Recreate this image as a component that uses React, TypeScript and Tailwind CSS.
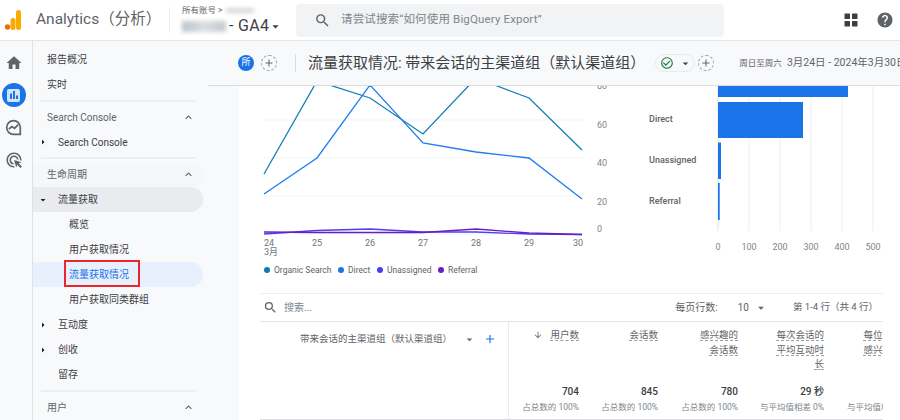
import { MdHome, MdBarChart, MdOutlineAdsClick, MdSearch, MdHelp, MdExpandLess, MdArrowDropDown, MdArrowRight, MdAdd, MdArrowDownward, MdCheckCircleOutline } from 'react-icons/md'

const FONT = 'font-["Roboto","Noto_Sans_CJK_SC",sans-serif]'

function NavRow({ label, level = 0, arrow, className = '' }: { label: string; level?: number; arrow?: 'down' | 'right'; className?: string }) {
  return (
    <div className={`flex h-[25px] items-center rounded-r-full text-[10px] text-[#3c4043] ${className}`} style={{ paddingLeft: level === 2 ? 36 : level === 1 ? 25 : 14 }}>
      {arrow === 'right' && <MdArrowRight className="ml-[-21px] mr-[9px] text-[12px] text-[#202124]" />}
      {arrow === 'down' && <MdArrowDropDown className="ml-[-21px] mr-[9px] text-[12px] text-[#202124]" />}
      {label}
    </div>
  )
}

function NavHeader({ label, className = '' }: { label: string; className?: string }) {
  return (
    <div className={`flex h-[25px] items-center justify-between rounded-r-full pl-[14px] pr-[8px] text-[10px] text-[#5f6368] ${className}`}>
      {label}
      <MdExpandLess className="text-[13px]" />
    </div>
  )
}

function Divider() {
  return <div className="my-[2.75px] ml-[8px] mr-[7px] h-[2px] bg-[#eceef1]" />
}

function LineChart() {
  const xs = [264, 317, 370, 423, 476, 529, 582]
  const series = [
    { color: '#127fb5', ys: [173, 80, 97, 133, 77, 97, 149] },
    { color: '#1f7cf0', ys: [193, 157, 84, 142, 151, 157, 198] },
    { color: '#4a3ff0', ys: [233, 229.5, 228, 231, 231, 233, 233.5] },
    { color: '#6a1ec0', ys: [231, 231.5, 231.5, 231.5, 228, 232, 233.5] },
  ]
  const legend = [
    { x: 267, tx: 274, color: '#0b7ab0', label: 'Organic Search' },
    { x: 341, tx: 348, color: '#1a73e8', label: 'Direct' },
    { x: 380, tx: 387, color: '#4a3ff0', label: 'Unassigned' },
    { x: 441, tx: 448, color: '#6a1ec0', label: 'Referral' },
  ]
  const bars = [
    { y: 80, h: 16, w: 130 },
    { y: 101, h: 36, w: 85 },
    { y: 141.5, h: 36.5, w: 3 },
    { y: 182, h: 37, w: 1.7 },
  ]
  return (
    <svg width={661} height={207} viewBox="239 85 661 207" className="block shrink-0" style={{ fontFamily: 'Roboto, sans-serif' }}>
      {[119, 157, 195, 233].map((y) => (
        <line key={y} x1={264} x2={583} y1={y} y2={y} stroke="#f1f3f4" />
      ))}
      {series.map((s) => (
        <polyline key={s.color} fill="none" stroke={s.color} strokeWidth={1.3} points={xs.map((x, i) => `${x},${s.ys[i]}`).join(' ')} />
      ))}
      {[24, 25, 26, 27, 28, 29, 30].map((d, i) => (
        <text key={d} x={i === 0 ? 264 : i === 6 ? 573 : xs[i] - 5} y={245} fontSize={9} fill="#70757a">{d}</text>
      ))}
      <text x={264} y={254} fontSize={9} fill="#70757a" style={{ fontFamily: 'Roboto, "Noto Sans CJK SC", sans-serif' }}>3月</text>
      {[['80', 88], ['60', 127], ['40', 165], ['20', 204], ['0', 231]].map(([t, y]) => (
        <text key={t} x={597} y={y} fontSize={9} fill="#80868b">{t}</text>
      ))}
      {legend.map((l) => (
        <g key={l.label}>
          <circle cx={l.x} cy={269} r={3} fill={l.color} />
          <text x={l.tx} y={272} fontSize={8.5} fill="#5f6368">{l.label}</text>
        </g>
      ))}
      {[749, 780, 811, 842, 873].map((x) => (
        <line key={x} x1={x} x2={x} y1={85} y2={230} stroke="#eceef0" />
      ))}
      <line x1={718} x2={718} y1={85} y2={230} stroke="#e0e2e5" />
      {bars.map((b) => (
        <rect key={b.y} x={718} y={b.y} width={b.w} height={b.h} fill="#1a73e8" />
      ))}
      {[['Direct', 121], ['Unassigned', 162], ['Referral', 203]].map(([t, y]) => (
        <text key={t} x={649} y={y} fontSize={9} fontWeight={500} fill="#5f6368">{t}</text>
      ))}
      {[0, 100, 200, 300, 400, 500].map((v, i) => (
        <text key={v} x={718 + i * 31} y={249} fontSize={9} fill="#80868b" textAnchor="middle">{v}</text>
      ))}
    </svg>
  )
}

const columns = [
  { w: 'w-[70px]', head: ['用户数'], arrow: true, value: '704', sub: '占总数的 100%' },
  { w: 'w-[79px]', head: ['会话数'], value: '845', sub: '占总数的 100%' },
  { w: 'w-[80px]', head: ['感兴趣的', '会话数'], value: '780', sub: '占总数的 100%' },
  { w: 'w-[86px]', head: ['每次会话的', '平均互动时', '长'], value: '29 秒', sub: '与平均值相差 0%' },
  { w: 'w-[87px]', head: ['每位活跃用', '感兴趣的会'], value: '', sub: '与平均值相差 0%' },
]

export default function App() {
  return (
    <div className={`flex h-[420px] w-[900px] flex-col overflow-hidden bg-white ${FONT}`}>
      {/* Top bar */}
      <header className="flex h-[41px] shrink-0 items-center border-b border-[#e3e5e8] bg-white">
        <svg width={18} height={22} viewBox="0 0 18 22" className="ml-[4px] shrink-0">
          <rect x={12} y={1} width={5} height={20} rx={2.5} fill="#f9ab00" />
          <rect x={6.5} y={9} width={5} height={12} rx={2.5} fill="#f9ab00" />
          <circle cx={3.5} cy={18} r={2.7} fill="#e37400" />
        </svg>
        <span className="ml-[14px] w-[133px] text-[15.5px] text-[#5f6368]">Analytics（分析）</span>
        <div className="h-[26px] w-px bg-[#e8eaed]" />
        <div className="ml-[12px] w-[114px]">
          <div className="flex h-[12px] items-center text-[8.5px] text-[#5f6368]">
            所有账号 &gt;
            <span className="ml-[3px] h-[5px] w-[28px] bg-[#d5d8dc] blur-[2px]" />
          </div>
          <div className="flex h-[20px] items-center text-[16px] tracking-[0.3px] text-[#3c4043]">
            <span className="h-[11px] w-[44px] bg-gradient-to-r from-[#b9c4cc] via-[#d9dee2] to-[#c3cad0] blur-[2px]" />
            <span className="ml-[3px]">- GA4</span>
            <MdArrowDropDown className="ml-[-1px] text-[15px]" />
          </div>
        </div>
        <div className="flex h-[33px] w-[428px] items-center rounded-[4px] bg-[#f1f3f4] pl-[18px]">
          <MdSearch className="text-[17px] text-[#5f6368]" />
          <span className="ml-[10px] text-[11.5px] tracking-[0.15px] text-[#80868b]">请尝试搜索“如何使用 BigQuery Export”</span>
        </div>
        <svg width={14} height={14} viewBox="0 0 14 14" className="ml-[120px] shrink-0" fill="#3c4043">
          <rect x={0.5} y={0.5} width={5.5} height={5.5} rx={0.5} />
          <rect x={8} y={0.5} width={5.5} height={5.5} rx={0.5} />
          <rect x={0.5} y={8} width={5.5} height={5.5} rx={0.5} />
          <rect x={8} y={8} width={5.5} height={5.5} rx={0.5} />
        </svg>
        <MdHelp className="ml-[18px] text-[18px] text-[#5f6368]" />
      </header>

      <div className="flex min-h-0 flex-1">
        {/* Icon rail */}
        <nav className="flex w-[33px] shrink-0 flex-col items-center border-r border-[#dfe1e5] bg-[#f8f9fb] pr-[5px] pt-[13px] text-[#5f6368]">
          <MdHome className="text-[18px]" />
          <div className="mt-[11px] flex h-[24px] w-[24px] items-center justify-center rounded-full bg-[#1a73e8]">
            <div className="flex h-[13px] w-[13px] items-center justify-center rounded-[2px] bg-[#d2e3fc]">
              <MdBarChart className="text-[12px] text-[#1a73e8]" />
            </div>
          </div>
          <svg width={17} height={17} viewBox="0 0 17 17" className="mt-[12px]" fill="none" stroke="currentColor" strokeWidth={1.7}>
            <path d="M15.3 8.5a6.8 6.8 0 1 0-6.8 6.8h6.8z" />
            <path d="M3.8 10.2l3-2.7 2.7 1.8 3.7-3.6" />
          </svg>
          <MdOutlineAdsClick className="mt-[15px] text-[18px]" />
        </nav>

        {/* Report nav */}
        <aside className="w-[175px] shrink-0 bg-[#f8f9fb] pt-[6px]">
          <div className="pr-[5px]">
            <NavRow label="报告概况" />
            <NavRow label="实时" />
            <Divider />
            <NavHeader label="Search Console" />
            <NavRow label="Search Console" level={1} arrow="right" />
            <Divider />
            <NavHeader label="生命周期" className="bg-[#f6f7f8]" />
            <NavRow label="流量获取" level={1} arrow="down" className="bg-[#e9ebee]" />
            <NavRow label="概览" level={2} />
            <NavRow label="用户获取情况" level={2} />
            <div className="flex h-[25px] items-center rounded-r-full bg-[#e8f0fe] pl-[36px] text-[10px] text-[#1a73e8]">
              <span className="relative">
                流量获取情况
                <span className="absolute bottom-[-5px] left-[-5px] right-[-11px] top-[-7px] border-2 border-[#e8262c]" />
              </span>
            </div>
            <NavRow label="用户获取同类群组" level={2} />
            <NavRow label="互动度" level={1} arrow="right" />
            <NavRow label="创收" level={1} arrow="right" />
            <NavRow label="留存" level={1} />
            <Divider />
            <NavHeader label="用户" />
          </div>
        </aside>

        {/* Main */}
        <main className="flex min-w-0 flex-1 flex-col overflow-hidden bg-[#f8f9fb]">
          <div className="flex h-[45px] shrink-0 items-center whitespace-nowrap border-b border-[#dadce0] pl-[30px] [&>span]:shrink-0">
            <span className="flex h-[16px] w-[16px] items-center justify-center rounded-full bg-[#1a73e8] text-[9px] text-white">所</span>
            <span className="ml-[7px] flex h-[16px] w-[16px] items-center justify-center rounded-full border border-dashed border-[#9aa0a6] text-[#5f6368]">
              <MdAdd className="text-[12px]" />
            </span>
            <span className="ml-[18px] h-[18px] w-px bg-[#dadce0]" />
            <span className="ml-[12px] text-[15px] text-[#3c4043]">流量获取情况: 带来会话的主渠道组（默认渠道组）</span>
            <span className="ml-[10px] flex h-[18px] w-[40px] items-center rounded-full border border-[#e8eaed] pl-[4px]">
              <MdCheckCircleOutline className="text-[14px] text-[#188038]" />
              <MdArrowDropDown className="ml-[5px] text-[13px] text-[#3c4043]" />
            </span>
            <span className="ml-[3px] flex h-[16px] w-[16px] items-center justify-center rounded-full border border-dashed border-[#9aa0a6] text-[#5f6368]">
              <MdAdd className="text-[12px]" />
            </span>
            <span className="ml-[25px] text-[8.5px] text-[#5f6368]">周日至周六</span>
            <span className="ml-[5px] text-[10.5px] text-[#5f6368]">3月24日 - 2024年3月30日</span>
          </div>

          <div className="ml-[31px] flex min-h-0 flex-1 flex-col overflow-hidden bg-white">
            <LineChart />
            <section className="ml-[21px] mr-[17px] overflow-hidden border-t border-[#eceef0]">
              <div className="flex h-[28px] items-center border-b border-[#e3e5e8] text-[10px] text-[#5f6368]">
                <MdSearch className="ml-[3px] text-[15px]" />
                <span className="ml-[6px] text-[#80868b]">搜索...</span>
                <span className="ml-auto">每页行数:</span>
                <span className="ml-[20px]">10</span>
                <MdArrowDropDown className="ml-[5px] text-[14px]" />
                <span className="ml-[25px] mr-[5px] text-[9.5px] text-[#5f6368]">第 1-4 行（共 4 行）</span>
              </div>
              <div className="flex h-[98px] border-b border-[#dadce0]">
                <div className="flex w-[249px] shrink-0 items-start border-r border-[#e8eaed] pl-[40px] pt-[10px] text-[9.5px] text-[#5f6368]">
                  带来会话的主渠道组（默认渠道组）
                  <MdArrowDropDown className="ml-[11px] mt-[1px] text-[13px]" />
                  <MdAdd className="ml-[7px] text-[14px] text-[#1a73e8]" />
                </div>
                {columns.map((c) => (
                  <div key={c.head[0]} className={`${c.w} flex shrink-0 flex-col pt-[6px] text-right`}>
                    <div className="h-[57px] text-[9.5px] leading-[14.5px] text-[#5f6368]">
                      {c.head.map((line, i) => (
                        <div key={i} className="whitespace-nowrap">
                          {c.arrow && <MdArrowDownward className="mr-[7px] inline text-[10px]" />}
                          <span className="border-b border-dashed border-[#9aa0a6]">{line}</span>
                        </div>
                      ))}
                    </div>
                    <div className="h-[14px] whitespace-nowrap text-[10px] font-medium leading-[14px] text-[#3c4043]">{c.value}</div>
                    <div className="mt-[2px] whitespace-nowrap text-[8.5px] leading-[12px] text-[#80868b]">{c.sub}</div>
                  </div>
                ))}
              </div>
            </section>
          </div>
        </main>
      </div>
    </div>
  )
}
